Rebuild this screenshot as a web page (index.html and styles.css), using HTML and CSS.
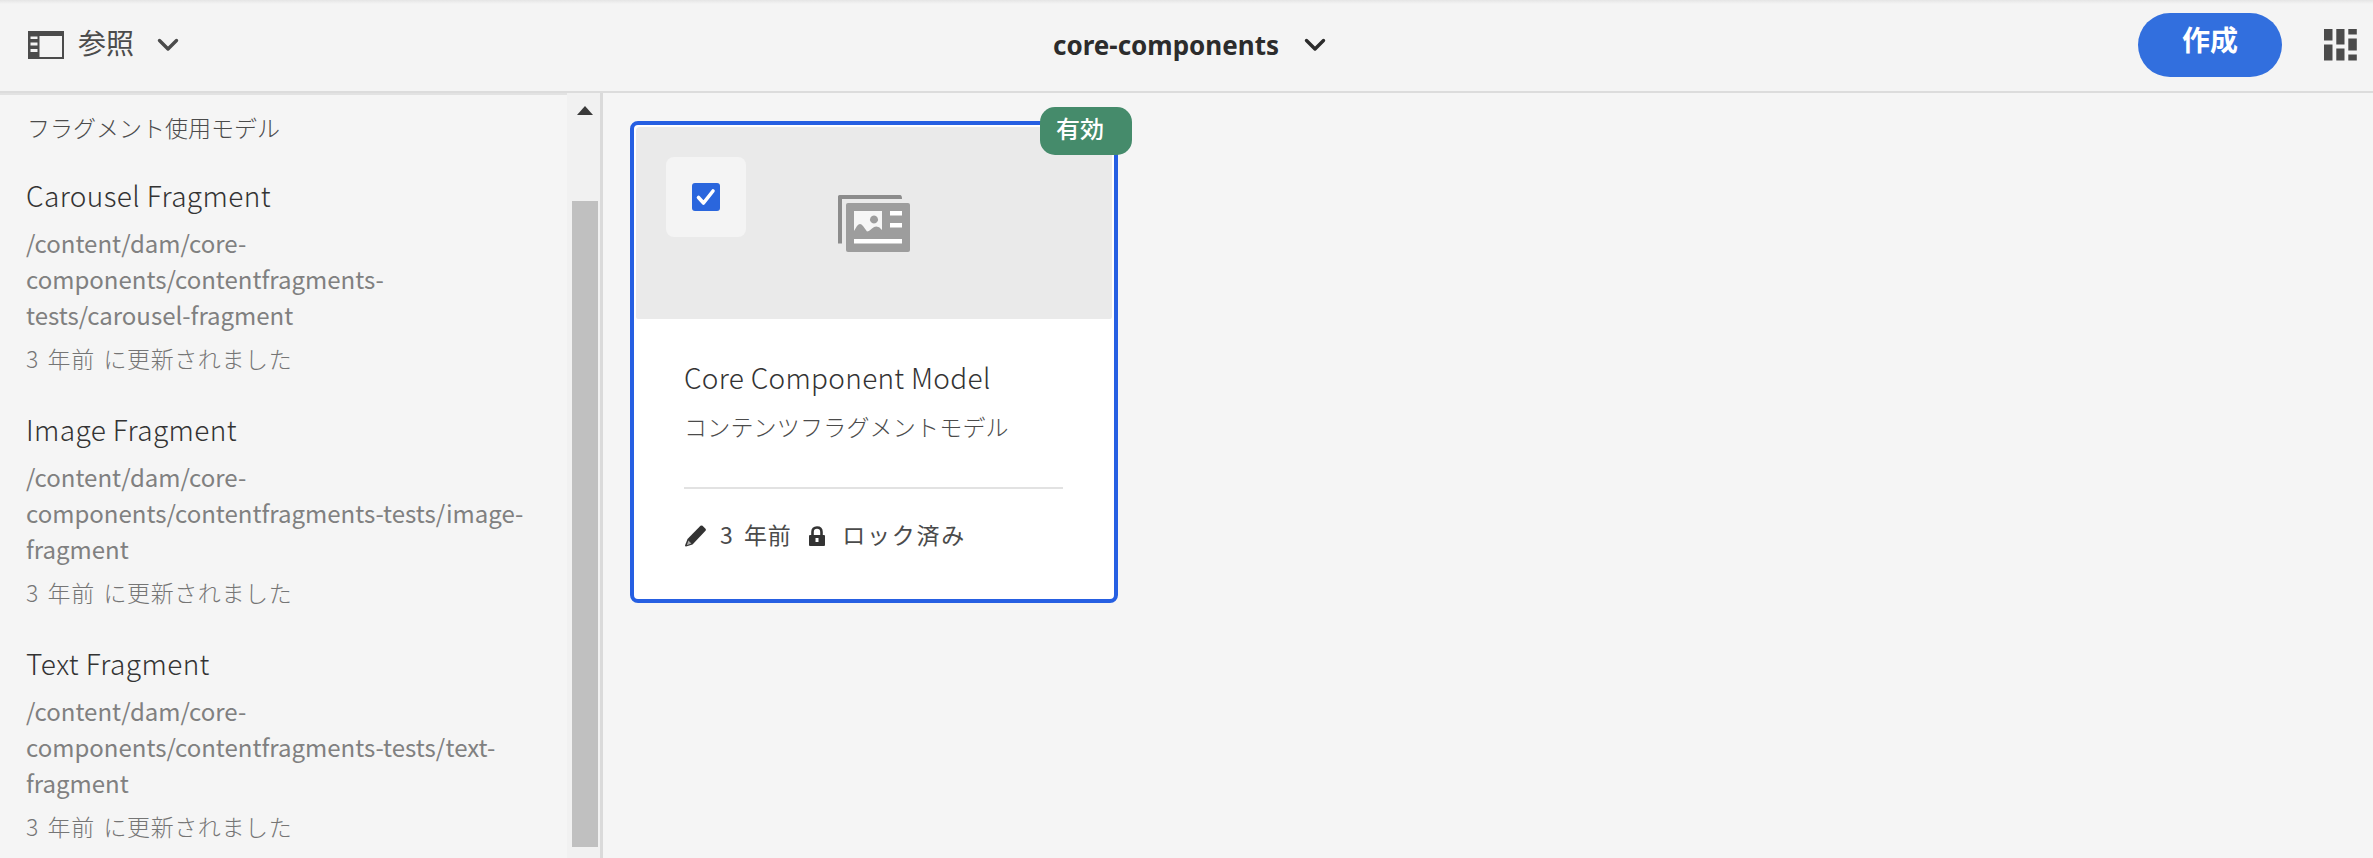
FILE: index.html
```html
<!DOCTYPE html>
<html lang="ja">
<head>
<meta charset="utf-8">
<title>core-components</title>
<link rel="stylesheet" href="styles.css">
</head>
<body>
<header class="bar">
  <div class="browse">
    <svg class="rail-icon" width="36" height="28" viewBox="0 0 36 28"><path fill="#4b4b4b" fill-rule="evenodd" d="M0 0h36v28H0zM11.500 5v21h22.500V5zM2.500 5.500v2.500h7V5.500zM2.500 11.500v3h7v-3zM2.500 18v3h7v-3z"/></svg>
    <span class="browse-label">参照</span>
    <svg class="chevron" width="22" height="14" viewBox="0 0 22 14"><path d="M2.500 2.500 11 11l8.500-8.500" fill="none" stroke="#4b4b4b" stroke-width="3.400" stroke-linecap="round" stroke-linejoin="round"/></svg>
  </div>
  <div class="crumb">
    <span class="crumb-label">core-components</span>
    <svg class="chevron" width="22" height="14" viewBox="0 0 22 14"><path d="M2.500 2.500 11 11l8.500-8.500" fill="none" stroke="#2c2c2c" stroke-width="3.400" stroke-linecap="round" stroke-linejoin="round"/></svg>
  </div>
  <div class="actions">
    <button class="create">作成</button>
    <svg class="view-icon" width="33" height="32" viewBox="0 0 33 32" fill="#4b4b4b"><path d="M0 0h8.500v11.500H0zM0 15.500h8.500v16H0zM12.300 0h8.200v15.500h-8.200zM12.300 19.500h8.200v12h-8.200zM24.300 0h8.500v5.500h-8.500zM24.300 9.500h8.500v12h-8.500zM24.300 25.500h8.500v6h-8.500z"/></svg>
  </div>
</header>
<main class="body">
  <aside class="rail">
    <div class="refs">
      <h2 class="refs-heading">フラグメント使用モデル</h2>
      <section class="ref">
        <h3 class="ref-title">Carousel Fragment</h3>
        <p class="ref-path">/content/dam/core-<br>components/contentfragments-<br>tests/carousel-fragment</p>
        <p class="ref-date">3 年前 に更新されました</p>
      </section>
      <section class="ref">
        <h3 class="ref-title">Image Fragment</h3>
        <p class="ref-path">/content/dam/core-<br>components/contentfragments-tests/image-<br>fragment</p>
        <p class="ref-date">3 年前 に更新されました</p>
      </section>
      <section class="ref">
        <h3 class="ref-title">Text Fragment</h3>
        <p class="ref-path">/content/dam/core-<br>components/contentfragments-tests/text-<br>fragment</p>
        <p class="ref-date">3 年前 に更新されました</p>
      </section>
    </div>
    <div class="scroll">
      <svg class="scroll-up" width="16" height="9" viewBox="0 0 16 9"><path d="M0 9 8 0l8 9z" fill="#3a3a3a"/></svg>
      <div class="thumb"></div>
    </div>
  </aside>
  <div class="content">
    <article class="card">
      <span class="badge">有効</span>
      <div class="preview">
        <div class="check">
          <svg width="28" height="28" viewBox="0 0 28 28"><rect width="28" height="28" rx="3" fill="#2a66dd"/><path d="m6.500 14.500 5 5.500L21 8" fill="none" stroke="#fff" stroke-width="3.600" stroke-linecap="round" stroke-linejoin="round"/></svg>
        </div>
        <svg class="model-icon" width="72" height="57" viewBox="0 0 72 57"><path d="M0 48.500V1.500Q0 0 1.500 0H62q2 0 2 4H4v44.500z" fill="#8c8c8c"/><rect x="8" y="8" width="64" height="49" rx="2" fill="#9d9d9d"/><path fill="#f6f6f6" fill-rule="evenodd" d="M16 16h28v19q-5-6-10-1.500-3 3-5 3L25 31q-3-4-6 0l-3 5zM36 20.500a4 4 0 1 0 .01 0z"/><path fill="#fff" d="M52 16h12v4.500H52zM52 28h12v4.500H52zM16 44h48v4.500H16z"/></svg>
      </div>
      <div class="info">
        <h3 class="card-title">Core Component Model</h3>
        <p class="card-type">コンテンツフラグメントモデル</p>
        <div class="meta">
          <svg class="pencil" width="21" height="22" viewBox="0 0 21 22"><path d="M15.500.8q1-.8 2 0l3 3q.8 1 0 2L7.500 19.500 1 21.500Q0 21.500 0 20.500L2.500 14z" fill="#333"/><path d="m3.400 15.500 3 3-4.600 1.700z" fill="#aaa"/></svg>
          <span class="modified">3 年前</span>
          <svg class="lock" width="16" height="20" viewBox="0 0 16 20"><path d="M3.500 10V6q0-4.500 4.500-4.500T12.500 6v4" fill="none" stroke="#333" stroke-width="2.600"/><rect y="9" width="16" height="11" rx="1" fill="#333"/><path d="M6.500 12h3v4h-3z" fill="#fff"/></svg>
          <span class="locked">ロック済み</span>
        </div>
      </div>
    </article>
  </div>
</main>
</body>
</html>
```
FILE: styles.css
```css
* { box-sizing: border-box; }
body, h2, h3, p { margin: 0; }
body {
  width: 2373px;
  height: 858px;
  overflow: hidden;
  display: flex;
  flex-direction: column;
  background: #f5f5f5;
  color: #4b4b4b;
  font-family: "Noto Sans CJK JP", sans-serif;
}
svg { display: block; flex: none; }
h2, h3 { font-weight: 400; }

.bar {
  height: 93px;
  flex: none;
  display: grid;
  grid-template-columns: 1fr auto 1fr;
  padding: 0 16px 2px 28px;
  background: linear-gradient(#e5e5e5, #f4f4f4 4px);
  border-bottom: 2px solid #dcdcdc;
}
.browse { display: flex; align-items: center; }
.browse-label { margin: 0 0 6px 14px; font-size: 28px; line-height: 40px; }
.browse .chevron { margin-left: 23px; }
.crumb { display: flex; align-items: center; margin-right: 6px; }
.crumb-label {
  color: #2c2c2c;
  font: 700 26px/40px "Noto Sans", sans-serif;
}
.crumb .chevron { margin-left: 25px; }
.actions { display: flex; justify-content: flex-end; align-items: center; gap: 42px; }
.create {
  width: 144px;
  height: 64px;
  padding: 0 0 11px;
  border: 0;
  border-radius: 32px;
  background: #326fde;
  color: #fff;
  font: 700 28px/40px "Noto Sans CJK JP", sans-serif;
}

.body { flex: 1; min-height: 0; display: flex; }
.rail { width: 603px; flex: none; display: flex; border-right: 3px solid #dadada; }
.refs { width: 567px; padding: 14px 0 0 26px; border-top: 2px solid #e2e2e2; overflow: hidden; }
.refs-heading { padding-left: 1px; font-size: 23px; line-height: 36px; margin-bottom: 32px; font-weight: 300; }
.ref { height: 234px; white-space: nowrap; }
.ref-title { font-size: 28px; line-height: 36px; letter-spacing: 0.4px; font-weight: 300; color: #333; }
.ref-path { margin-top: 12px; font-size: 24px; line-height: 36px; color: #808080; }
.ref-date {
  margin-top: 7px;
  font-size: 23px;
  line-height: 36px;
  letter-spacing: 0.6px;
  word-spacing: 3px;
  color: #757575;
  font-weight: 300;
}
.scroll { width: 33px; padding: 13px 2px 0 5px; background: #f1f1f1; }
.scroll-up { margin-left: 5px; }
.thumb { margin-top: 86px; height: 646px; background: #c0c0c0; }

.content { flex: 1; padding: 28px 27px; }
.card {
  position: relative;
  width: 488px;
  height: 482px;
  padding: 2px;
  border: 4px solid #265fe2;
  border-radius: 8px;
  background: #fff;
}
.badge {
  position: absolute;
  top: -18px;
  right: -18px;
  width: 92px;
  height: 48px;
  padding-left: 16px;
  border-radius: 15px;
  background: #458b6b;
  color: #fff;
  font-size: 24px;
  font-weight: 500;
  line-height: 41px;
}
.preview { display: flex; height: 192px; padding: 30px; background: #eaeaea; border-radius: 4px 4px 2px 2px; }
.check {
  width: 80px;
  height: 80px;
  display: grid;
  place-items: center;
  border-radius: 8px;
  background: #f4f4f4;
}
.model-icon { margin: 38px 0 0 92px; }
.info { padding: 40px 49px 0 48px; }
.card-title {
  font-size: 28px;
  line-height: 36px;
  letter-spacing: 0.3px;
  font-weight: 300;
  color: #333;
  white-space: nowrap;
}
.card-type { margin-top: 13px; font-size: 23px; line-height: 36px; letter-spacing: 0.2px; font-weight: 300; white-space: nowrap; }
.meta {
  display: flex;
  align-items: center;
  margin-top: 43px;
  padding-top: 27px;
  border-top: 2px solid #e2e2e2;
  font-size: 23px;
  line-height: 36px;
  white-space: nowrap;
}
.modified { letter-spacing: 0.6px; word-spacing: 5px; }
.locked { letter-spacing: 1.7px; }
.pencil { margin: 4px 14px 0 1px; }
.lock { margin: 4px 17px 0 18px; }
```
